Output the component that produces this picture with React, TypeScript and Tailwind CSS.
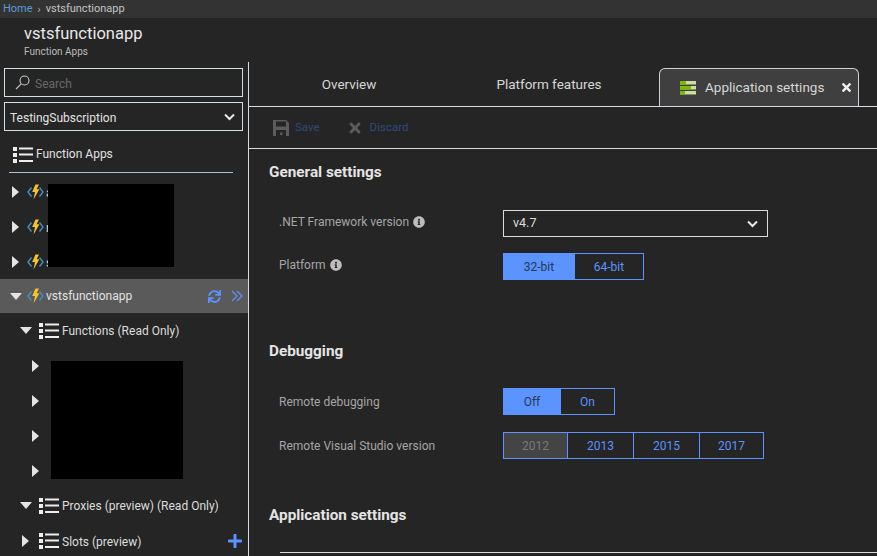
import React from 'react';
import { FaInfoCircle, FaPlus, FaSync, FaTimes } from 'react-icons/fa';

const font = { fontFamily: 'Roboto, "Noto Sans", sans-serif' };

function ListIcon() {
  return (
    <svg width="20" height="18" viewBox="0 0 20 18" className="shrink-0" fill="#eeeeee">
      <rect x="0" y="1" width="4" height="4" />
      <rect x="0" y="7" width="4" height="4" />
      <rect x="0" y="13" width="4" height="4" />
      <rect x="6" y="1.5" width="14" height="2" />
      <rect x="6" y="7.5" width="14" height="2" />
      <rect x="6" y="14" width="14" height="2" />
    </svg>
  );
}

function Arrow({ open }: { open?: boolean }) {
  if (open) {
    return (
      <svg width="12" height="7" viewBox="0 0 12 7" className="shrink-0">
        <path d="M0 0H12L6 7Z" fill="#e4e4e4" />
      </svg>
    );
  }
  return (
    <svg width="7" height="12" viewBox="0 0 7 12" className="shrink-0">
      <path d="M0 0L7 6L0 12Z" fill="#e4e4e4" />
    </svg>
  );
}

function BoltIcon() {
  return (
    <svg width="17" height="16" viewBox="0 0 17 16" className="shrink-0 block">
      <path d="M4.5 3.5L1 8L4.5 12.5" fill="none" stroke="#3f8fc4" strokeWidth="1.4" />
      <path d="M12.5 3.5L16 8L12.5 12.5" fill="none" stroke="#3f8fc4" strokeWidth="1.4" />
      <path d="M8.5 0.5H12L9.6 5.2H12.4L6.5 15.5L8 8H5.2Z" fill="#f7c325" />
    </svg>
  );
}

function AppRow({ label }: { label: string }) {
  return (
    <div className="h-[35px] pl-[12px] flex items-center">
      <Arrow />
      <span className="ml-[8px]"><BoltIcon /></span>
      <span className="ml-[2px] pt-[2px] text-[12px] text-[#dddddd]">{label}</span>
    </div>
  );
}

function ChildRow() {
  return (
    <div className="h-[35px] pl-[32px] flex items-center">
      <Arrow />
    </div>
  );
}

function SettingRow({
  label,
  info,
  children,
  className,
}: {
  label: string;
  info?: boolean;
  children: React.ReactNode;
  className?: string;
}) {
  return (
    <div className={`flex items-center pl-[10px] ${className ?? ''}`}>
      <div className={`w-[224px] flex items-center gap-[4px] text-[12px] text-[#a6a6a6] ${info ? 'pb-[3px]' : ''}`}>
        {label}
        {info && <FaInfoCircle size={12} color="#bdbdbd" />}
      </div>
      {children}
    </div>
  );
}

function Toggle({
  items,
  selected,
  disabled,
}: {
  items: { label: string; width: string }[];
  selected?: number;
  disabled?: number;
}) {
  return (
    <div className="flex h-[27px] border border-[#5b93ff]">
      {items.map((item, i) => (
        <div
          key={item.label}
          className={`${item.width} flex items-center justify-center text-[12px] border-[#5b93ff] ${i > 0 ? 'border-l' : ''} ${
            i === selected
              ? 'bg-[#5b93ff] text-[#2a3850]'
              : i === disabled
                ? 'bg-[#444444] text-[#7a7a7a]'
                : 'text-[#5b93ff]'
          }`}
        >
          {item.label}
        </div>
      ))}
    </div>
  );
}

export default function App() {
  return (
    <div className="w-[877px] h-[556px] overflow-hidden bg-[#252525] flex flex-col relative" style={font}>
      <div className="h-[18px] bg-[#333333] flex items-center pl-[3px] text-[11px]">
        <span className="text-[#5b9bd8]">Home</span>
        <span className="text-[#b5b5b5] mx-[5px] text-[10px]">›</span>
        <span className="text-[#c4c4c4]">vstsfunctionapp</span>
      </div>

      <div className="h-[44px] pl-[24px] flex flex-col">
        <div className="text-[16.5px] leading-[24px] mt-[4px] text-[#e8e8e8]">vstsfunctionapp</div>
        <div className="text-[10px] leading-[12px] text-[#bdbdbd]">Function Apps</div>
      </div>

      <div className="flex flex-1 min-h-0">
        <aside className="w-[249px] shrink-0 border-r border-[#d5dde3] overflow-hidden">
          <div className="mt-[6px] mx-[4px] w-[239px] h-[29px] border border-[#d3e0e8] flex items-center pl-[10px]">
            <svg width="15" height="15" viewBox="0 0 15 15" fill="none" stroke="#c8c8c8" strokeWidth="1.1">
              <circle cx="9.5" cy="5.5" r="4.5" />
              <path d="M6.2 8.8L1 14" />
            </svg>
            <span className="ml-[5px] pt-[3px] text-[12px] text-[#6a6a6a]">Search</span>
          </div>
          <div className="mt-[5px] mx-[4px] w-[239px] h-[29px] border border-[#d3e0e8] flex items-center justify-between pl-[5px] pr-[7px]">
            <span className="pt-[3px] text-[12px] text-[#e2e2e2]">TestingSubscription</span>
            <svg width="11" height="8" viewBox="0 0 11 8" fill="none" stroke="#e8e8e8" strokeWidth="2">
              <path d="M1 1.5L5.5 6L10 1.5" />
            </svg>
          </div>
          <div className="mt-[6px] ml-[9px] w-[224px] h-[36px] border-b border-[#a9c4d8] flex items-center pl-[4px]">
            <ListIcon />
            <span className="ml-[3px] pb-[2px] text-[12px] text-[#e2e2e2]">Function Apps</span>
          </div>

          <div className="h-px" />
          <AppRow label="a" />
          <AppRow label="r" />
          <AppRow label="s" />
          <div className="h-[34px] bg-[#5a5a5a] pl-[10px] flex items-center">
            <Arrow open />
            <span className="ml-[5px]"><BoltIcon /></span>
            <span className="ml-[2px] text-[12px] text-[#e2e2e2]">vstsfunctionapp</span>
            <span className="ml-auto mr-[10px]"><FaSync size={13} color="#5b93ff" /></span>
            <svg width="12" height="12" viewBox="0 0 12 12" fill="none" stroke="#5b93ff" strokeWidth="1.2" className="mr-[5px]">
              <path d="M1 1L6 6L1 11M6 1L11 6L6 11" />
            </svg>
          </div>
          <div className="h-[35px] pl-[20px] flex items-center">
            <Arrow open />
            <span className="ml-[7px]"><ListIcon /></span>
            <span className="ml-[3px] text-[12px] text-[#dddddd]">Functions (Read Only)</span>
          </div>
          <ChildRow />
          <ChildRow />
          <ChildRow />
          <ChildRow />
          <div className="h-[35px] pl-[20px] flex items-center">
            <Arrow open />
            <span className="ml-[7px]"><ListIcon /></span>
            <span className="ml-[3px] text-[12px] text-[#dddddd]">Proxies (preview) (Read Only)</span>
          </div>
          <div className="h-[35px] pl-[22px] flex items-center">
            <Arrow />
            <span className="ml-[10px]"><ListIcon /></span>
            <span className="ml-[3px] pt-[2px] text-[12px] text-[#dddddd]">Slots (preview)</span>
            <span className="ml-auto mr-[5px]"><FaPlus size={16} color="#5b93ff" /></span>
          </div>
        </aside>

        <main className="flex-1 min-w-0 flex flex-col">
          <div className="h-[45px] border-b border-[#d5dde3] flex items-end text-[13.5px] text-[#d6d6d6]">
            <div className="w-[200px] h-[44px] flex items-center justify-center">Overview</div>
            <div className="w-[200px] h-[44px] flex items-center justify-center">Platform features</div>
            <div className="ml-[10px] w-[200px] h-[38px] bg-[#3f3f3f] border border-b-0 border-[#c9d2d8] rounded-t-[6px] flex items-center pl-[20px] pr-[5px]">
              <svg width="16" height="14" viewBox="0 0 16 14" className="shrink-0">
                <rect y="0" width="16" height="3.5" fill="#c8dfa0" />
                <rect y="0" width="6" height="3.5" fill="#7fb800" />
                <rect y="5" width="16" height="3.5" fill="#c8dfa0" />
                <rect y="5" x="0" width="11" height="3.5" fill="#7fb800" />
                <rect y="10" width="16" height="3.5" fill="#c8dfa0" />
                <rect y="10" width="5" height="3.5" fill="#7fb800" />
              </svg>
              <span className="ml-[9px]">Application settings</span>
              <span className="ml-auto"><FaTimes size={13} color="#f0f0f0" /></span>
            </div>
          </div>

          <div className="h-[42px] border-b border-[#d5dde3] flex items-center pl-[24px] text-[11.5px] text-[#2e4a78]">
            <svg width="16" height="16" viewBox="0 0 16 16" fill="#5c5c5c">
              <path d="M0 0H13L16 3V16H0ZM3 1.5V6.5H13V1.5ZM3 10V16H13V10ZM7 12.5H9.5V15H7Z" fillRule="evenodd" />
            </svg>
            <span className="ml-[6px]">Save</span>
            <span className="ml-[27px]"><FaTimes size={16} color="#5c5c5c" /></span>
            <span className="ml-[7px]">Discard</span>
          </div>

          <div className="pl-[20px] flex flex-col">
            <h2 className="mt-[13px] text-[15.3px] leading-[20px] font-bold text-[#e4e4e4]">General settings</h2>
            <SettingRow label=".NET Framework version" info className="mt-[28px]">
              <div className="w-[265px] h-[27px] border border-[#dcdcdc] flex items-center justify-between pl-[9px] pr-[9px] text-[12.5px] text-[#dcdcdc]">
                v4.7
                <svg width="11" height="8" viewBox="0 0 11 8" fill="none" stroke="#e8e8e8" strokeWidth="2">
                  <path d="M1 1.5L5.5 6L10 1.5" />
                </svg>
              </div>
            </SettingRow>
            <SettingRow label="Platform" info className="mt-[16px]">
              <Toggle
                selected={0}
                items={[
                  { label: '32-bit', width: 'w-[70px]' },
                  { label: '64-bit', width: 'w-[69px]' },
                ]}
              />
            </SettingRow>

            <h2 className="mt-[61px] text-[15.3px] leading-[20px] font-bold text-[#e4e4e4]">Debugging</h2>
            <SettingRow label="Remote debugging" className="mt-[27px]">
              <Toggle
                selected={0}
                items={[
                  { label: 'Off', width: 'w-[56px]' },
                  { label: 'On', width: 'w-[54px]' },
                ]}
              />
            </SettingRow>
            <SettingRow label="Remote Visual Studio version" className="mt-[17px]">
              <Toggle
                disabled={0}
                items={[
                  { label: '2012', width: 'w-[63px]' },
                  { label: '2013', width: 'w-[66px]' },
                  { label: '2015', width: 'w-[66px]' },
                  { label: '2017', width: 'w-[64px]' },
                ]}
              />
            </SettingRow>

            <h2 className="mt-[46px] text-[15.3px] leading-[20px] font-bold text-[#e4e4e4]">Application settings</h2>
            <div className="mt-[27px] ml-[11px] border-t border-[#d5dde3]" />
          </div>
        </main>
      </div>

      {/* redacted blocks in the original screenshot */}
      <div className="absolute left-[48px] top-[184px] w-[126px] h-[83px] bg-black" />
      <div className="absolute left-[51px] top-[361px] w-[132px] h-[118px] bg-black" />
    </div>
  );
}
